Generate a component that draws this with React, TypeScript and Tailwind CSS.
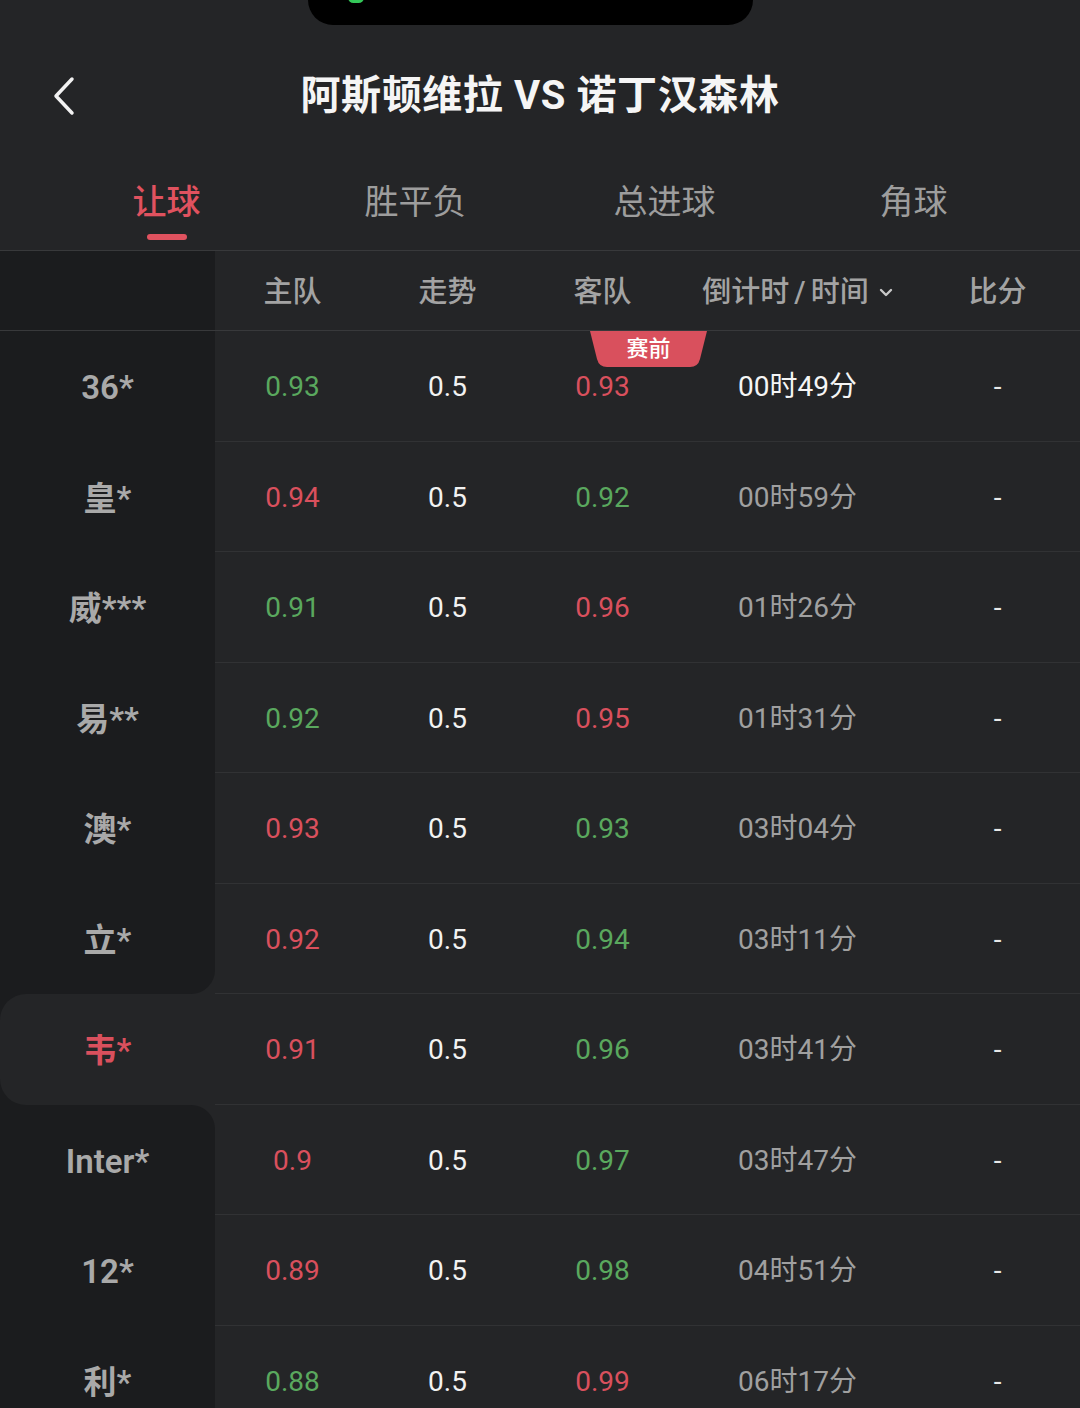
import React from "react";

type Row = {
  name: string;
  home: string;
  homeUp: boolean;
  away: string;
  awayUp: boolean;
  time: string;
};

const rows: Row[] = [
  { name: "36*", home: "0.93", homeUp: false, away: "0.93", awayUp: true, time: "00时49分" },
  { name: "皇*", home: "0.94", homeUp: true, away: "0.92", awayUp: false, time: "00时59分" },
  { name: "威***", home: "0.91", homeUp: false, away: "0.96", awayUp: true, time: "01时26分" },
  { name: "易**", home: "0.92", homeUp: false, away: "0.95", awayUp: true, time: "01时31分" },
  { name: "澳*", home: "0.93", homeUp: true, away: "0.93", awayUp: false, time: "03时04分" },
  { name: "立*", home: "0.92", homeUp: true, away: "0.94", awayUp: false, time: "03时11分" },
  { name: "韦*", home: "0.91", homeUp: true, away: "0.96", awayUp: false, time: "03时41分" },
  { name: "Inter*", home: "0.9", homeUp: true, away: "0.97", awayUp: false, time: "03时47分" },
  { name: "12*", home: "0.89", homeUp: true, away: "0.98", awayUp: false, time: "04时51分" },
  { name: "利*", home: "0.88", homeUp: false, away: "0.99", awayUp: true, time: "06时17分" },
];

const SELECTED = 6;
const font = { fontFamily: 'Roboto, "Noto Sans CJK SC", sans-serif' };

function Badge() {
  return (
    <div className="absolute left-[590px] top-0 w-[117px] h-[37px] flex items-center justify-center">
      <svg className="absolute inset-0" width="117" height="37" viewBox="0 0 117 37">
        <path d="M0 0 H117 L110 28 Q108 36 100 36 H17 Q9 36 7 28 Z" fill="#d9505d" />
      </svg>
      <span className="relative text-[22px] font-medium leading-none text-white -mt-[2px]">赛前</span>
    </div>
  );
}

function SideCell({ name, index }: { name: string; index: number }) {
  if (index === SELECTED) {
    return (
      <div className="w-[215px] h-full bg-[#1b1c1e]">
        <div className="h-full rounded-l-[26px] bg-[#242527] flex items-center justify-center pt-[3px] text-[33px] font-semibold text-[#d9505d]">
          {name}
        </div>
      </div>
    );
  }
  const corner =
    index === SELECTED - 1 ? "rounded-br-[24px]" : index === SELECTED + 1 ? "rounded-tr-[24px]" : "";
  return (
    <div
      className={`w-[215px] h-full bg-[#1b1c1e] flex items-center justify-center pt-[3px] text-[33px] font-semibold text-[#a9a9a9] ${corner}`}
    >
      {name}
    </div>
  );
}

export default function App() {
  return (
    <div className="w-[1080px] h-[1408px] overflow-hidden bg-[#242527]" style={font}>
      {/* status bar */}
      <div className="h-[25px] flex justify-center">
        <div className="relative mr-[20px] w-[445px] h-[25px] bg-black rounded-b-[26px] overflow-hidden">
          <div className="absolute left-[40px] -top-[8px] w-[16px] h-[11px] rounded-full bg-[#34c759]" />
        </div>
      </div>

      {/* header */}
      <div className="relative h-[142px] flex items-center justify-center">
        <svg className="absolute left-[50px] top-[51px]" width="28" height="40" viewBox="0 0 28 40">
          <path d="M22 3 L6 20 L22 37" fill="none" stroke="#f2f2f2" strokeWidth="3.5" strokeLinecap="round" strokeLinejoin="round" />
        </svg>
        <h1 className="text-[40px] font-bold text-[#f5f5f5] tracking-[0.6px]">阿斯顿维拉 VS 诺丁汉森林</h1>
      </div>

      {/* tabs */}
      <div className="h-[84px] px-[42px] flex border-b border-[#38393b]">
        {["让球", "胜平负", "总进球", "角球"].map((t, i) => (
          <div key={t} className="w-[249px] flex flex-col items-center pt-[15px]">
            <span className={`h-[40px] leading-[40px] text-[34px] ${i === 0 ? "text-[#e0525f] font-medium" : "text-[#9d9d9d]"}`}>
              {t}
            </span>
            {i === 0 && <div className="mt-[12px] w-[40px] h-[6px] rounded-full bg-[#e0525f]" />}
          </div>
        ))}
      </div>

      {/* column header */}
      <div className="flex h-[80px] border-b border-[#38393b] pt-[4px] text-[29px] font-medium text-[#a3a3a3]">
        <div className="w-[215px] -mt-[4px] bg-[#1b1c1e]" />
        <div className="w-[155px] flex items-center justify-center">主队</div>
        <div className="w-[155px] flex items-center justify-center">走势</div>
        <div className="w-[155px] flex items-center justify-center">客队</div>
        <div className="w-[235px] flex items-center justify-center gap-[10px]">
          <span>
            倒计时<span className="mx-[5px]">/</span>时间
          </span>
          <svg width="14" height="10" viewBox="0 0 14 10">
            <path d="M2 2 L7 7 L12 2" fill="none" stroke="#c8c8c8" strokeWidth="2.4" strokeLinecap="round" strokeLinejoin="round" />
          </svg>
        </div>
        <div className="w-[165px] flex items-center justify-center">比分</div>
      </div>

      {/* rows */}
      {rows.map((r, i) => (
        <div key={i} className="relative flex h-[110.5px]">
          <SideCell name={r.name} index={i} />
          <div className="flex flex-1 border-b border-[#313234] pt-[3px] text-[28px]">
            <div className={`w-[155px] flex items-center justify-center ${r.homeUp ? "text-[#d9505d]" : "text-[#5aa85e]"}`}>
              {r.home}
            </div>
            <div className="w-[155px] flex items-center justify-center text-[#f2f2f2]">0.5</div>
            <div className={`w-[155px] flex items-center justify-center ${r.awayUp ? "text-[#d9505d]" : "text-[#5aa85e]"}`}>
              {r.away}
            </div>
            <div className={`w-[235px] flex items-center justify-center ${i === 0 ? "text-[#f5f5f5]" : "text-[#a0a0a0]"}`}>
              {r.time}
            </div>
            <div className="w-[165px] flex items-center justify-center text-[#e8e8e8]">-</div>
          </div>
          {i === 0 && <Badge />}
        </div>
      ))}
    </div>
  );
}
